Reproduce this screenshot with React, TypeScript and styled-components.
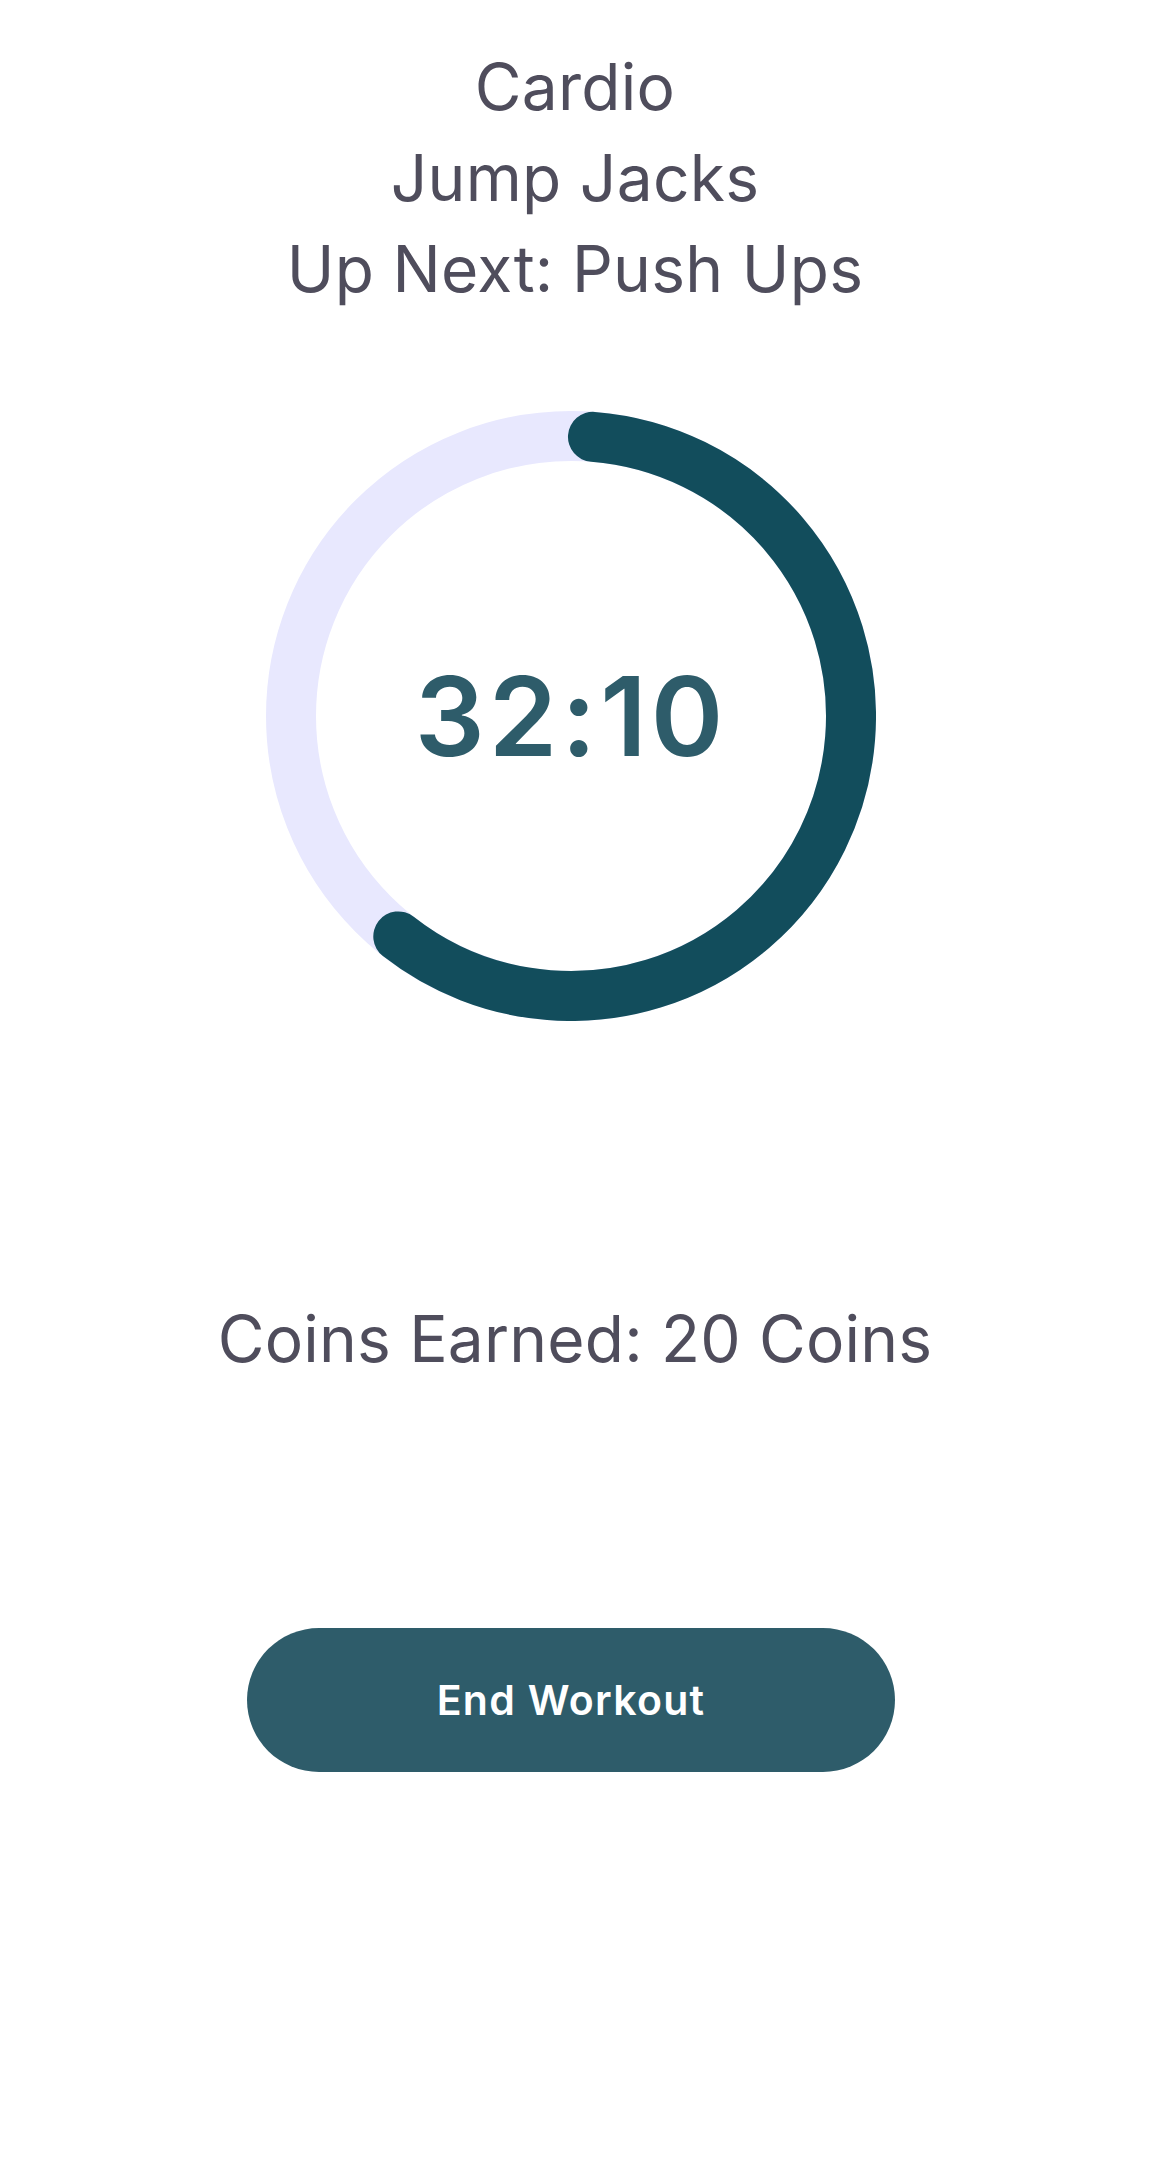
import React from "react";
import styled, { createGlobalStyle } from "styled-components";

const GlobalStyle = createGlobalStyle`
  html, body {
    margin: 0;
    padding: 0;
    background: #ffffff;
  }
  body {
    font-family: Inter, "Noto Sans", sans-serif;
  }
`;

const Page = styled.main`
  width: 1150px;
  min-height: 2175px;
  display: flex;
  flex-direction: column;
  align-items: center;
  padding-top: 41px;
  box-sizing: border-box;
`;

const Titles = styled.header`
  display: flex;
  flex-direction: column;
  align-items: center;
`;

const TitleLine = styled.h1`
  margin: 0;
  font-family: Inter, "Noto Sans", sans-serif;
  font-weight: 400;
  font-size: 64px;
  line-height: 91px;
  letter-spacing: 0.3px;
  color: #4f4d5c;
  text-align: center;
`;

const RingWrap = styled.div`
  position: relative;
  width: 610px;
  height: 610px;
  margin-top: 97px;
  margin-right: 8px;
  display: flex;
  align-items: center;
  justify-content: center;
`;

const RingSvg = styled.svg`
  position: absolute;
  inset: 0;
`;

const Timer = styled.div`
  position: relative;
  font-family: Inter, "Noto Sans", sans-serif;
  font-weight: 600;
  font-size: 110px;
  letter-spacing: 4px;
  color: #2e5c6a;
  line-height: 1;
`;

const Coins = styled.p`
  margin: 272px 0 0;
  font-family: Inter, "Noto Sans", sans-serif;
  font-weight: 400;
  font-size: 64px;
  line-height: 91px;
  letter-spacing: 0.2px;
  color: #4f4d5c;
`;

const EndButton = styled.button`
  margin-top: 244px;
  margin-right: 8px;
  width: 648px;
  height: 144px;
  border: none;
  border-radius: 72px;
  background: #2e5c6a;
  color: #ffffff;
  font-family: Inter, "Noto Sans", sans-serif;
  font-weight: 600;
  font-size: 41px;
  letter-spacing: 1.3px;
  cursor: pointer;
`;

const R = 280;
const CIRC = 2 * Math.PI * R;
const START_DEG = 4.5;
const END_DEG = 218;

export default function App() {
  const arcLen = (CIRC * (END_DEG - START_DEG)) / 360;
  return (
    <>
      <GlobalStyle />
      <Page>
        <Titles>
          <TitleLine>Cardio</TitleLine>
          <TitleLine>Jump Jacks</TitleLine>
          <TitleLine>Up Next: Push Ups</TitleLine>
        </Titles>
        <RingWrap>
          <RingSvg width="610" height="610" viewBox="0 0 610 610">
            <circle cx="305" cy="305" r={R} fill="none" stroke="#e8e8fe" strokeWidth="50" />
            <circle
              cx="305"
              cy="305"
              r={R}
              fill="none"
              stroke="#124d5c"
              strokeWidth="50"
              strokeLinecap="round"
              strokeDasharray={`${arcLen} ${CIRC}`}
              transform={`rotate(${START_DEG - 90} 305 305)`}
            />
          </RingSvg>
          <Timer>32:10</Timer>
        </RingWrap>
        <Coins>Coins Earned: 20 Coins</Coins>
        <EndButton>End Workout</EndButton>
      </Page>
    </>
  );
}
